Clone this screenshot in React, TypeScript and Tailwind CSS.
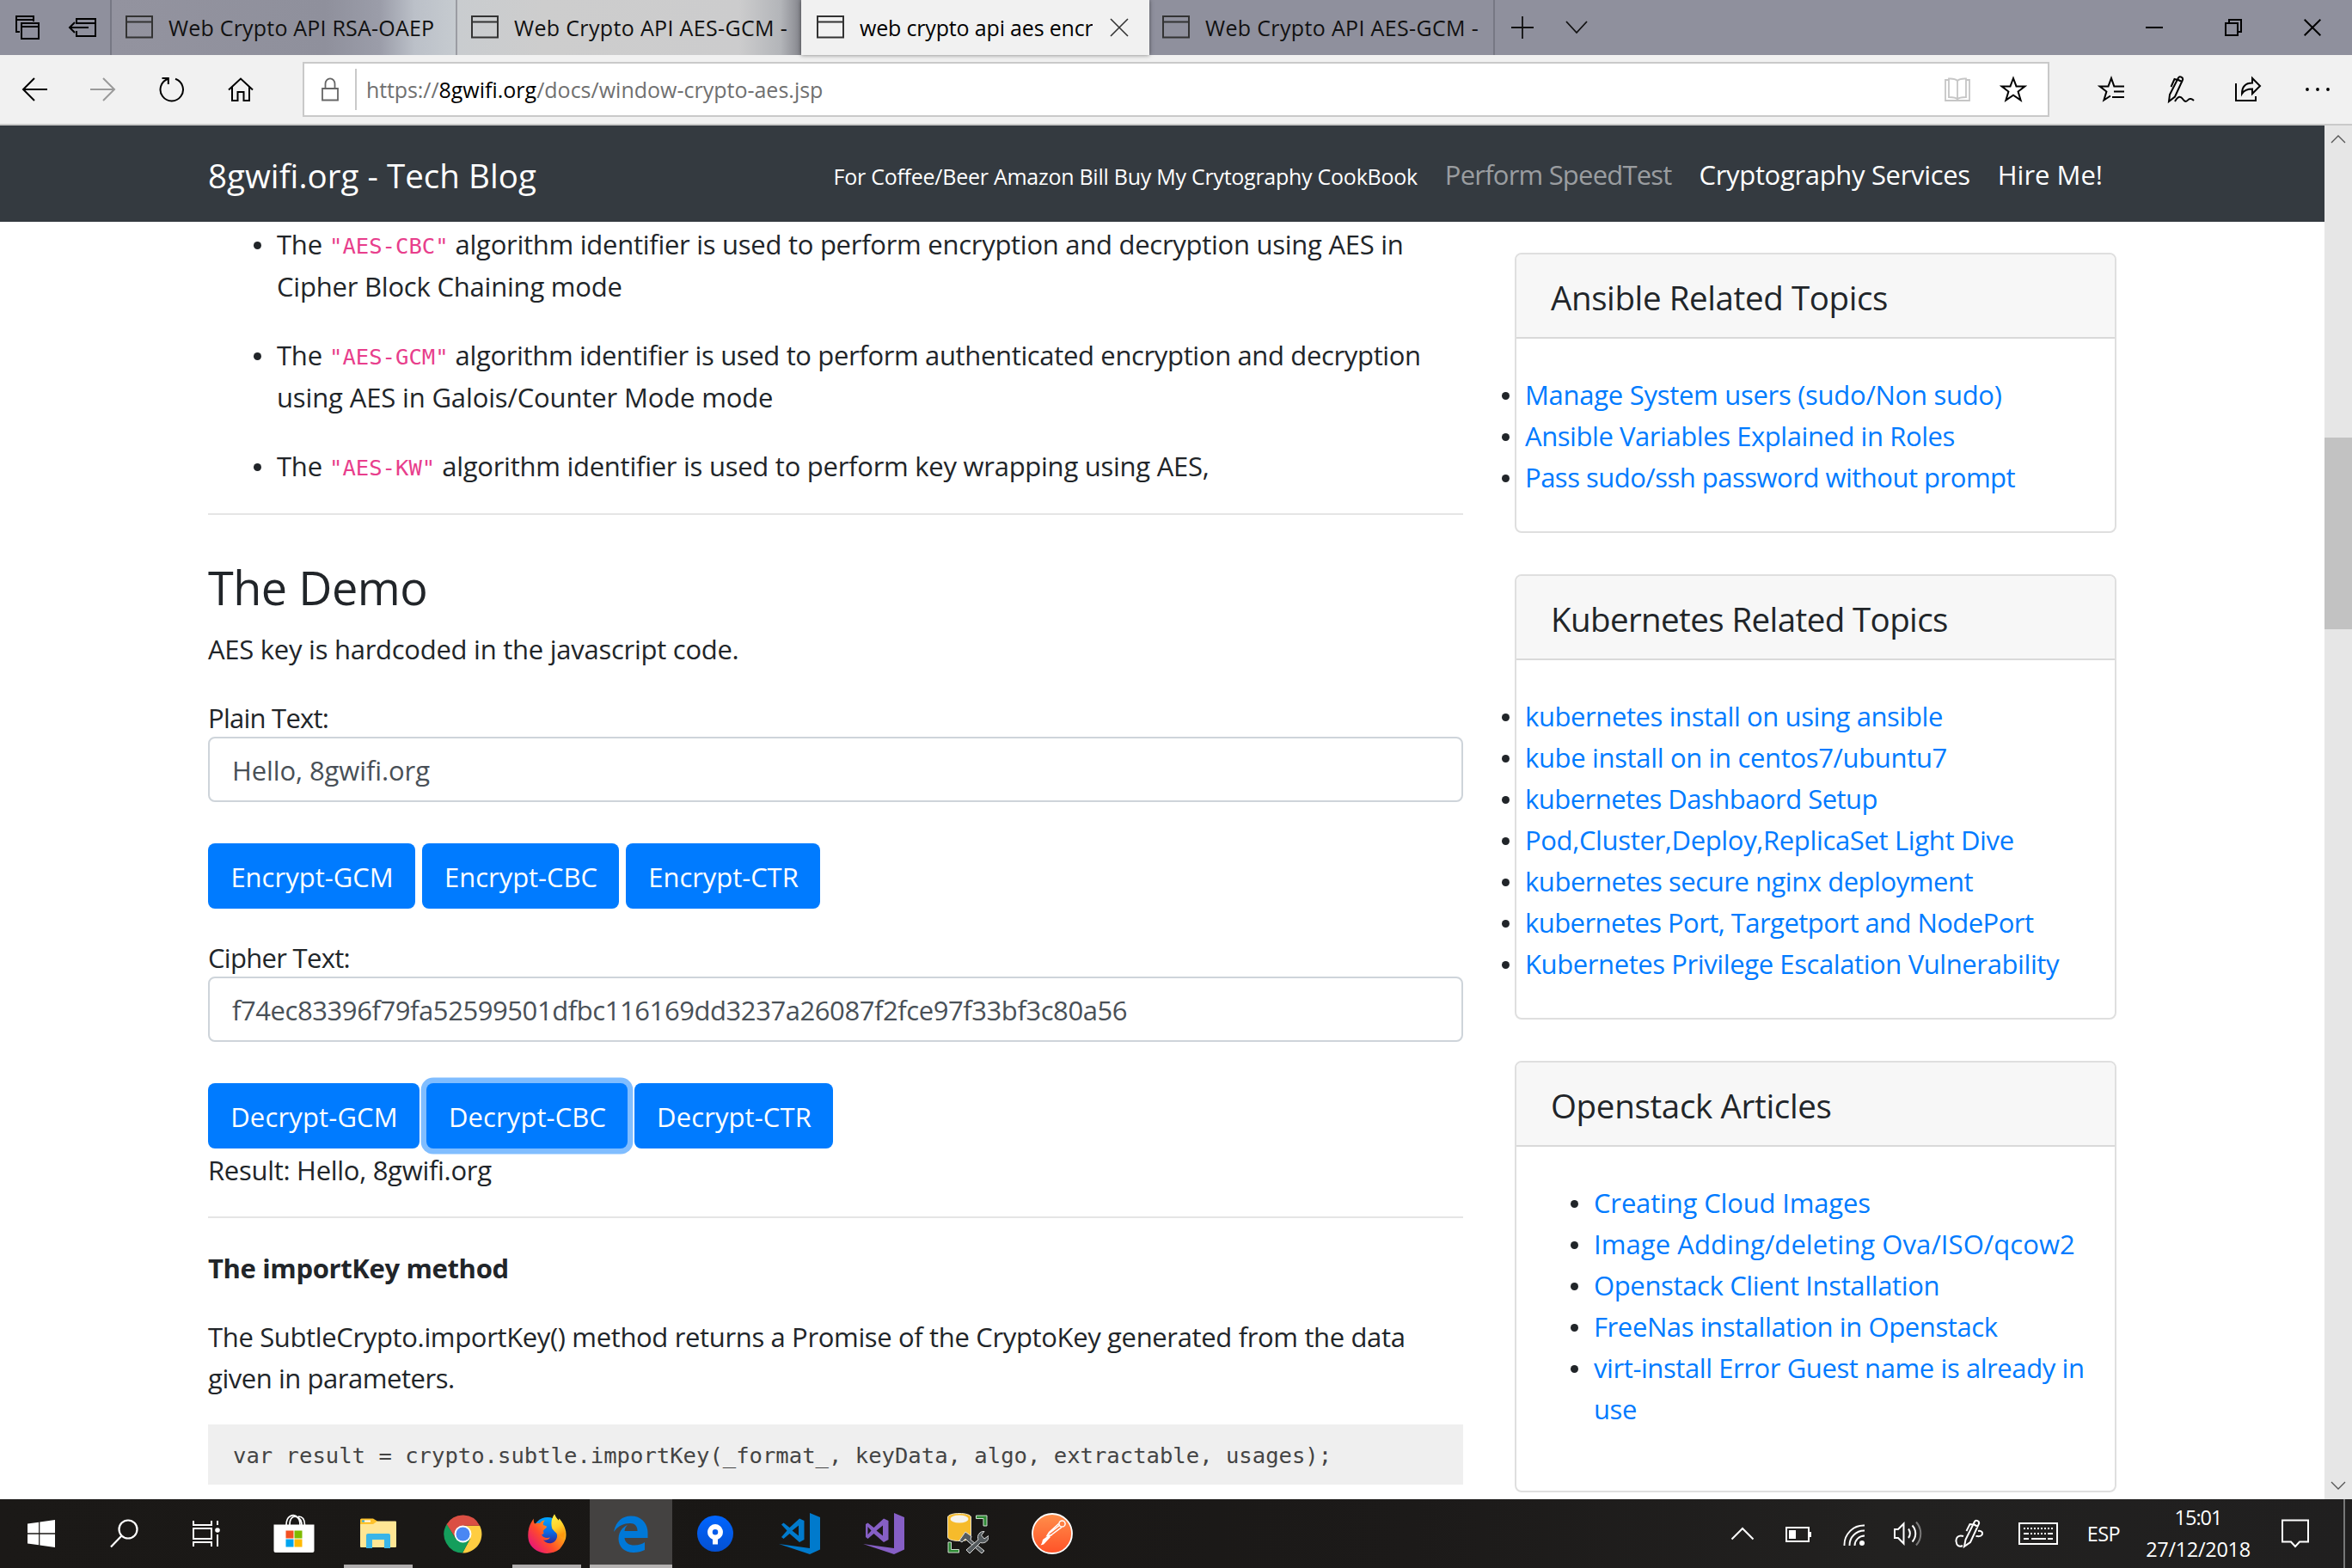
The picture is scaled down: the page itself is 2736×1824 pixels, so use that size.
import type { ReactNode } from "react";

const stroke = { fill: "none", stroke: "currentColor" } as const;

/* ---------- Browser tabs ---------- */

function PageIcon() {
  return (
    <svg width="32" height="28" viewBox="0 0 32 28" className="shrink-0 text-[#333]" {...stroke} strokeWidth="2">
      <path d="M1 1H31V25.500H1ZM1 7.500H31" />
    </svg>
  );
}

function TabTitle({ children, className }: { children: ReactNode; className: string }) {
  return <span className={`-mt-px ml-[18px] overflow-hidden text-[25px] leading-[34px] whitespace-nowrap ${className}`}>{children}</span>;
}

function TabBar() {
  return (
    <div className="flex h-16 bg-[#8f909d] text-[#111]">
      <div className="flex w-[130px] shrink-0 items-center border-r-2 border-[#777884] pl-[18px] text-black">
        <svg width="28" height="30" viewBox="0 0 28 30" {...stroke} strokeWidth="2">
          <path d="M5 20H1V2H21V8M1 6H21M7 10H27V28H7ZM7 14H27" />
        </svg>
        <svg width="33" height="24" viewBox="0 0 33 24" className="ml-[33px]" {...stroke} strokeWidth="2">
          <path d="M10 8V2H32V22H10V16M10 7H32M24 12H2M8 6L2 12L8 18" />
        </svg>
      </div>
      <div className="flex w-[402px] shrink-0 items-center border-r-2 border-[#9b9ca3] bg-[linear-gradient(90deg,#93939f_0%,#8f909c_62%,#9b9da9_78%,#bbc0c8_88%,#c6cbd0_100%)] pl-4">
        <PageIcon />
        <TabTitle className="tracking-[0.2px]">Web Crypto API RSA-OAEP</TabTitle>
      </div>
      <div className="flex w-[400px] shrink-0 items-center bg-[linear-gradient(90deg,#c9cccf_0%,#cdcdcd_25%,#cccccd_82%,#b3b5b9_94%,#85868d_100%)] pl-4">
        <PageIcon />
        <TabTitle className="tracking-[0.34px]">Web Crypto API AES-GCM -</TabTitle>
      </div>
      <div className="z-10 flex w-[405px] shrink-0 items-center bg-[#f1f1f1] pl-[18px] text-black shadow-[0_0_5px_rgba(0,0,0,0.5)]">
        <PageIcon />
        <TabTitle className="w-[271px] tracking-[-0.17px]">web crypto api aes encr</TabTitle>
        <svg width="22" height="22" viewBox="0 0 22 22" className="ml-[20px] text-[#333]" {...stroke} strokeWidth="1.600">
          <path d="M1 1L21 21M21 1L1 21" />
        </svg>
      </div>
      <div className="flex w-[402px] shrink-0 items-center border-r-2 border-[#777884] pl-[15px]">
        <PageIcon />
        <TabTitle className="tracking-[0.34px]">Web Crypto API AES-GCM -</TabTitle>
      </div>
      <div className="flex grow items-center pl-[18px]">
        <svg width="28" height="28" viewBox="0 0 28 28" {...stroke} strokeWidth="1.800">
          <path d="M1 14H27M14 1V27" />
        </svg>
        <svg width="26" height="16" viewBox="0 0 26 16" className="ml-9" {...stroke} strokeWidth="1.800">
          <path d="M1 1L13 14L25 1" />
        </svg>
        <div className="mr-9 ml-auto flex items-center text-black">
          <svg width="20" height="2" viewBox="0 0 20 2"><path d="M0 0H20V2H0Z" fill="currentColor" /></svg>
          <svg width="20" height="20" viewBox="0 0 20 20" className="ml-[72px]" {...stroke} strokeWidth="2">
            <path d="M1 5H15V19H1ZM5 5V1H19V15H15" />
          </svg>
          <svg width="20" height="20" viewBox="0 0 20 20" className="ml-[72px]" {...stroke} strokeWidth="2">
            <path d="M0.700 0.700L19.300 19.300M19.300 0.700L0.700 19.300" />
          </svg>
        </div>
      </div>
    </div>
  );
}

/* ---------- Address bar ---------- */

function AddressBar() {
  return (
    <div className="flex h-[82px] items-center border-b-2 border-[#c9c9c9] bg-[#f1f1f1] pl-[25px] text-black">
      <svg width="30" height="28" viewBox="0 0 30 28" {...stroke} strokeWidth="2"><path d="M30 14H2M15 1L2 14L15 27" /></svg>
      <svg width="30" height="28" viewBox="0 0 30 28" className="ml-[50px] text-[#9a9a9a]" {...stroke} strokeWidth="2"><path d="M0 14H28M15 1L28 14L15 27" /></svg>
      <svg width="30" height="30" viewBox="0 0 30 30" className="ml-[50px]" {...stroke} strokeWidth="2">
        <path d="M19 2.700A13.200 13.200 0 1 1 10.500 2.700M3.500 2H10.800V9" />
      </svg>
      <svg width="30" height="30" viewBox="0 0 30 30" className="ml-[50px]" {...stroke} strokeWidth="2">
        <path d="M1 15.500L15 2.500L29 15.500M5 12V28H11.500V18H18.500V28H25V12" />
      </svg>
      <div className="ml-[57px] flex h-16 w-[2032px] items-center border-2 border-[#c9c9c9] bg-white">
        <svg width="20" height="28" viewBox="0 0 20 28" className="ml-5 text-[#666]" {...stroke} strokeWidth="1.800">
          <path d="M1 13H19V26.500H1ZM4.500 13V7.500A5.500 6.200 0 0 1 15.500 7.500V13" />
        </svg>
        <div className="ml-[19px] h-12 w-[2px] bg-[#c9c9c9]" />
        <div className="ml-[11px] flex text-[25px] leading-[34px] whitespace-nowrap text-[#707070]">
          <span className="tracking-[-0.1px]">https://</span>
          <span className="text-black">8gwifi.org</span>
          <span>/docs/window-crypto-aes.jsp</span>
        </div>
        <svg width="30" height="28" viewBox="0 0 30 28" className="mr-[34px] ml-auto text-[#c6c6c6]" {...stroke} strokeWidth="1.800">
          <path d="M5 3H1V27H29V3H25M15 4C12 1 8 1.500 5 1.500V23C9 23 13 23 15 25.500C17 23 21 23 25 23V1.500C22 1.500 18 1 15 4ZM15 4V25" />
        </svg>
        <svg width="32" height="32" viewBox="0 0 32 32" className="mr-6" {...stroke} strokeWidth="2">
          <path d="M16 3L19.500 12.400H29.500L21.600 18.500L24.600 28.500L16 22.600L7.400 28.500L10.400 18.500L2.500 12.400H12.500Z" />
        </svg>
      </div>
      <svg width="32" height="32" viewBox="0 0 32 32" className="ml-[56px]" {...stroke} strokeWidth="2">
        <path d="M31 12.400H19.300L16 3L12.500 12.400H2.500L10.400 18.500L7.400 28.500L15 23.500M19 18.500H31M17 25H31" />
      </svg>
      <svg width="32" height="34" viewBox="0 0 32 34" className="ml-[49px]" {...stroke} strokeWidth="2">
        <path d="M2 31L3 23L13 3.500C14.500 1 19 3 18 6L9 25.500L2 31ZM12 5.500L18 8.500M12 6L8.500 5L4.500 14M9 31C13 24 16 25 18 28C20 31 22 32 24 29.500C26 27 29 28 31 30" />
      </svg>
      <svg width="32" height="32" viewBox="0 0 32 32" className="ml-[46px]" {...stroke} strokeWidth="2">
        <path d="M2 9V29H25V24M9 21C9 12 14 8.500 21 8.500V3L30 12L21 21V15.500C15 15.500 11.500 17 9 21Z" />
      </svg>
      <svg width="28" height="6" viewBox="0 0 28 6" className="ml-[51px]" fill="currentColor">
        <circle cx="2" cy="3" r="1.900" /><circle cx="14" cy="3" r="1.900" /><circle cx="26" cy="3" r="1.900" />
      </svg>
    </div>
  );
}

/* ---------- Blog page ---------- */

function Navbar() {
  return (
    <div className="flex h-28 items-center bg-[#343a40] pr-[258px] pl-[242px] text-[31px] leading-[48px] whitespace-nowrap text-white">
      <span className="mt-[4px] text-[38.5px] tracking-[0.04px]">8gwifi.org - Tech Blog</span>
      <div className="mt-[4px] ml-auto flex items-baseline gap-8">
        <span className="text-[25px] tracking-[-0.26px]">For Coffee/Beer Amazon Bill Buy My Crytography CookBook</span>
        <span className="tracking-[-0.8px] text-[#9a9da0]">Perform SpeedTest</span>
        <span className="tracking-[-0.33px]">Cryptography Services</span>
        <span>Hire Me!</span>
      </div>
    </div>
  );
}

function Bullet() {
  return <span className="mt-[21px] size-[9px] shrink-0 rounded-full bg-[#212529]" />;
}

function Algorithm({ name, children, rest }: { name: string; children: ReactNode; rest?: ReactNode }) {
  return (
    <li className="mb-8 flex pl-[53px]">
      <Bullet />
      <div className="ml-[18px]">
        <div className="flex h-[49px]">
          <span className="w-[61px] tracking-[-0.2px]">The</span>
          <code className="mr-[8px] pt-[2px] font-['DejaVu_Sans_Mono',monospace] text-[25.58px] text-[#e83e8c]">{name}</code>
          {children}
        </div>
        {rest}
      </div>
    </li>
  );
}

function Button({ children, className }: { children: ReactNode; className: string }) {
  return (
    <button className={`flex h-[76px] shrink-0 items-center justify-center rounded-lg bg-[#007bff] pt-px pl-px text-white ${className}`}>{children}</button>
  );
}

function Field({ children }: { children: ReactNode }) {
  return <div className="flex h-[76px] items-center rounded-lg border-2 border-[#ced4da] bg-white pt-[2px] pl-[26px] text-[#495057]">{children}</div>;
}

function Article() {
  return (
    <div className="w-[1460px] shrink-0 pt-[2px]">
      <ul>
        <Algorithm name={'"AES-CBC"'} rest={<div className="tracking-[-0.21px]">Cipher Block Chaining mode</div>}>
          <span className="tracking-[-0.27px]">algorithm identifier is used to perform encryption and decryption using AES in</span>
        </Algorithm>
        <Algorithm name={'"AES-GCM"'} rest={<div className="tracking-[-0.14px]">using AES in Galois/Counter Mode mode</div>}>
          <span className="tracking-[-0.35px]">algorithm identifier is used to perform authenticated encryption and decryption</span>
        </Algorithm>
        <Algorithm name={'"AES-KW"'}>
          <span className="tracking-[-0.26px]">algorithm identifier is used to perform key wrapping using AES,</span>
        </Algorithm>
      </ul>
      <div className="-mt-[2px] h-[2px] bg-[#e5e5e5]" />
      <h2 className="mt-[50px] text-[54px] leading-[68px] tracking-[-0.5px]">The Demo</h2>
      <p className="mt-[14px] tracking-[-0.26px]">AES key is hardcoded in the javascript code.</p>
      <p className="mt-[32px] mb-[-2px] tracking-[-0.75px]">Plain Text:</p>
      <Field><span className="tracking-[-0.1px]">Hello, 8gwifi.org</span></Field>
      <div className="mt-[48px] flex gap-2">
        <Button className="w-[241px]">Encrypt-GCM</Button>
        <Button className="w-[229px] tracking-[-0.05px]">Encrypt-CBC</Button>
        <Button className="w-[226px] tracking-[-0.05px]">Encrypt-CTR</Button>
      </div>
      <p className="mt-[33px] mb-[-2px] tracking-[-0.7px]">Cipher Text:</p>
      <Field><span className="tracking-[-0.43px]">f74ec83396f79fa52599501dfbc116169dd3237a26087f2fce97f33bf3c80a56</span></Field>
      <div className="mt-[48px] flex gap-2">
        <Button className="w-[246px] tracking-[0.16px]">Decrypt-GCM</Button>
        <Button className="w-[234px] tracking-[0.1px] shadow-[0_0_0_6.4px_#80bdff]">Decrypt-CBC</Button>
        <Button className="w-[231px] tracking-[0.1px]">Decrypt-CTR</Button>
      </div>
      <p className="mt-[1px] tracking-[-0.29px]">Result: Hello, 8gwifi.org</p>
      <div className="mt-[30px] h-[2px] bg-[#e5e5e5]" />
      <p className="mt-[34px] font-bold tracking-[-0.36px]">The importKey method</p>
      <p className="mt-8 tracking-[-0.35px]">The SubtleCrypto.importKey() method returns a Promise of the CryptoKey generated from the data</p>
      <p className="tracking-[-0.45px]">given in parameters.</p>
      <pre className="mt-[30px] h-[70px] bg-[#efefef] pl-[29px] font-['DejaVu_Sans_Mono',monospace] text-[25.58px] leading-[72px] text-[#444]">
        var result = crypto.subtle.importKey(_format_, keyData, algo, extractable, usages);
      </pre>
    </div>
  );
}

function Card({ title, titleClass, listClass, links }: { title: string; titleClass: string; listClass: string; links: [string, string][] }) {
  return (
    <div className="mb-12 rounded-lg border-2 border-[#dfdfdf] bg-white">
      <h5 className={`h-[98px] rounded-t-md border-b-2 border-[#d9d9d9] bg-[#f7f7f7] pt-6 pl-10 text-[38.5px] leading-[52px] ${titleClass}`}>{title}</h5>
      <ul className={`mt-[41px] ${listClass}`}>
        {links.map(([text, cls]) => (
          <li key={text} className="flex">
            <Bullet />
            <a className={`ml-[18px] whitespace-pre text-[#007bff] ${cls}`}>{text}</a>
          </li>
        ))}
      </ul>
    </div>
  );
}

function Sidebar() {
  return (
    <div className="ml-[60px] w-[700px] shrink-0 pt-9">
      <Card
        title="Ansible Related Topics"
        titleClass="tracking-[-0.4px]"
        listClass="-ml-[17px] mb-[39px]"
        links={[
          ["Manage System users (sudo/Non sudo)", "tracking-[-0.28px]"],
          ["Ansible Variables Explained in Roles", "tracking-[-0.43px]"],
          ["Pass sudo/ssh password without prompt", "tracking-[-0.5px]"],
        ]}
      />
      <Card
        title="Kubernetes Related Topics"
        titleClass="tracking-[-0.6px]"
        listClass="-ml-[17px] mb-[39px]"
        links={[
          ["kubernetes install on using ansible", "tracking-[-0.4px]"],
          ["kube install on in centos7/ubuntu7", "tracking-[-0.34px]"],
          ["kubernetes Dashbaord Setup", "tracking-[-0.52px]"],
          ["Pod,Cluster,Deploy,ReplicaSet Light Dive", "tracking-[-0.34px]"],
          ["kubernetes secure nginx deployment", "tracking-[-0.46px]"],
          ["kubernetes Port, Targetport and NodePort", "tracking-[-0.55px]"],
          ["Kubernetes Privilege Escalation Vulnerability", "tracking-[-0.4px]"],
        ]}
      />
      <Card
        title="Openstack Articles"
        titleClass="tracking-[-0.33px]"
        listClass="ml-[63px] mb-[71px]"
        links={[
          ["Creating Cloud Images", "tracking-[-0.16px]"],
          ["Image Adding/deleting Ova/ISO/qcow2", "tracking-[0.07px]"],
          ["Openstack Client Installation", "tracking-[-0.36px]"],
          ["FreeNas installation in Openstack", "tracking-[-0.4px]"],
          ["virt-install Error Guest name is already in\nuse", "tracking-[-0.41px]"],
        ]}
      />
    </div>
  );
}

function Scrollbar() {
  return (
    <div className="flex w-8 shrink-0 flex-col items-center bg-[#e6e6e6] text-[#555]">
      <svg width="18" height="10" viewBox="0 0 18 10" className="mt-[11px]" {...stroke} strokeWidth="1.300"><path d="M1 9L9 1L17 9" /></svg>
      <div className="mt-[342px] h-[223px] w-8 bg-[#c2c2c2]" />
      <svg width="18" height="10" viewBox="0 0 18 10" className="mt-auto mb-[11px]" {...stroke} strokeWidth="1.300"><path d="M1 1L9 9L17 1" /></svg>
    </div>
  );
}

/* ---------- Taskbar ---------- */

function Task({ children, running, active }: { children: ReactNode; running?: boolean; active?: boolean }) {
  return (
    <div className={`flex h-20 w-[98px] flex-col items-center ${active ? "px-px" : ""}`}>
      <div className={`flex h-[76px] items-center justify-center pt-1 ${active ? "w-24 bg-[#444241]" : "w-20"}`}>{children}</div>
      {active && <div className="h-1 w-24 bg-[#b5b2b1]" />}
      {running && <div className="h-1 w-20 bg-[#b0adad]" />}
    </div>
  );
}

function Taskbar() {
  return (
    <div className="flex h-20 items-stretch bg-[linear-gradient(90deg,#1b1917_0%,#191715_35%,#1c1a19_60%,#222120_80%,#201f1f_100%)] text-white">
      <div className="flex w-[293px] items-center pl-8">
        <svg width="32" height="32" viewBox="0 0 32 32" fill="currentColor">
          <path d="M0 4.600L13.100 2.800V15.300H0ZM14.300 2.600L32 0V15.300H14.300ZM0 16.700H13.100V29.200L0 27.400ZM14.300 16.700H32V32L14.300 29.400Z" />
        </svg>
        <svg width="34" height="34" viewBox="0 0 34 34" className="ml-16" {...stroke} strokeWidth="2.200">
          <circle cx="21" cy="12" r="10.500" /><path d="M13.500 19.500L1 32.500" />
        </svg>
        <svg width="34" height="32" viewBox="0 0 34 32" className="ml-[62px]" {...stroke} strokeWidth="2">
          <path d="M1 1V6H22V1M1 31V26H22V31M1 10H22V22H1ZM29 1V6M29 17V31" /><circle cx="29" cy="12" r="2.800" fill="white" stroke="none" />
        </svg>
      </div>

      <Task>
        <svg width="48" height="48" viewBox="0 0 48 48">
          <path d="M15 14C15 3 23 1 27 4C31 6 33 9 33 14M19 14C19 6 23 3 27 4.500C30 6 31 10 31 14M29 4C34 4 36.500 8 36.500 14" fill="none" stroke="white" strokeWidth="1.700" />
          <path d="M0.500 13.500H47.500V44a2 2 0 0 1-2 2H2.500a2 2 0 0 1-2-2Z" fill="white" />
          <path d="M14.500 20.500H23.500V29.500H14.500Z" fill="#f25022" /><path d="M24.500 20.500H33.500V29.500H24.500Z" fill="#7fba00" />
          <path d="M14.500 30.500H23.500V39.500H14.500Z" fill="#00a4ef" /><path d="M24.500 30.500H33.500V39.500H24.500Z" fill="#ffb900" />
        </svg>
      </Task>
      <Task running>
        <svg width="42" height="36" viewBox="0 0 42 36">
          <path d="M0 2a1.500 1.500 0 0 1 1.500-1.500H15L20 3.500V9H0Z" fill="#fdc22c" />
          <path d="M0 7H15L20 3.500H41a1 1 0 0 1 1 1V33a1 1 0 0 1-1 1H1a1 1 0 0 1-1-1Z" fill="#ffe694" />
          <path d="M2 2.500H5V4.500H2Z" fill="#3ab5e8" /><path d="M5 2.500H12V4.500H5Z" fill="white" />
          <path d="M7 35V20a2 2 0 0 1 2-2H33a2 2 0 0 1 2 2V35H28V25H14V35Z" fill="#3ab5e8" />
        </svg>
      </Task>
      <Task>
        <svg width="45" height="45" viewBox="0 0 48 48">
          <path d="M24 24L33.200 29.300L23.500 47.500A23.500 23.500 0 0 0 44.900 13.500H24Z" fill="#ffcd41" />
          <path d="M24 24L14.800 29.300L4.080 11.500A23.500 23.500 0 0 0 23.500 47.500L33.200 29.300Z" fill="#149e5c" />
          <path d="M3.900 11.800A23.500 23.500 0 0 1 44.900 13.500H24L14.500 28.500Z" fill="#db4f43" />
          <circle cx="24" cy="24" r="10.600" fill="white" /><circle cx="24" cy="24" r="8.600" fill="#4a87f3" />
        </svg>
      </Task>
      <Task running>
        <svg width="45" height="47" viewBox="0 0 45 47">
          <defs>
            <linearGradient id="ffBody" x1="1" y1="0.100" x2="0.100" y2="0.900">
              <stop offset="0" stopColor="#ffe226" /><stop offset="0.350" stopColor="#ff9a16" /><stop offset="0.650" stopColor="#ff4b2b" /><stop offset="1" stopColor="#e5127d" />
            </linearGradient>
            <linearGradient id="ffGlobe" x1="0" y1="0" x2="0" y2="1">
              <stop offset="0" stopColor="#00a7ff" /><stop offset="0.500" stopColor="#0a6be6" /><stop offset="1" stopColor="#3b1480" />
            </linearGradient>
            <linearGradient id="ffTail" x1="0" y1="0" x2="0.300" y2="1">
              <stop offset="0" stopColor="#fff14a" /><stop offset="0.600" stopColor="#ffd22b" /><stop offset="1" stopColor="#ff980e" />
            </linearGradient>
          </defs>
          <circle cx="23" cy="21" r="17" fill="url(#ffGlobe)" />
          <path d="M7 5.500C6.500 8 7 10 8 11.500C10 10.500 12 10.500 14 11C15.500 8.500 18 7.500 20 7.500C18 9.500 17.500 11 18 13C20 14 22 14 22 15C22 17 18 18 18 20C18 22 20 23 16 24C17 28 22 28.500 26 27.500C24 30.500 20 31 18 30.500C22 36 32 36 34 27C34.500 22 32 20 28 17C28 9 28 5 31 0.500C32 3.500 34 5.500 36 8L36.500 5.500C42 12 46 20 44 29C42 34 41 36 37 41C25 50 8 46 2 34C-1 27 0 17 4 10C5 8 6 6.500 7 5.500Z" fill="url(#ffBody)" />
          <path d="M31 0.500C32 3.500 34 5.500 36 8L36.500 5.500C41 11 45 20 42 28C38 26 30 21 28 16C26.500 9 28 5 31 0.500Z" fill="url(#ffTail)" />
        </svg>
      </Task>
      <Task active>
        <svg width="40" height="43" viewBox="0 0 40 43">
          <path d="M0 19C2 8 9 0.500 20 0.500C33 0.500 39.500 10 39.500 20V26H12.500C13 32 18 34.500 24 34.500C29 34.500 33 33 36 31V40C32 42 28 43 23 43C12 43 5.500 36 5.500 27C5.500 19 10 13.500 16 11C13.500 13.500 12.800 15.500 12.500 18H27.500C27.500 13 25 9 19 9C10.500 9 4 13 0 19Z" fill="#0078d7" />
        </svg>
      </Task>
      <Task>
        <svg width="42" height="42" viewBox="0 0 42 42">
          <defs><linearGradient id="stree" x1="0" y1="0" x2="0" y2="1"><stop offset="0" stopColor="#0065ff" /><stop offset="1" stopColor="#0450d2" /></linearGradient></defs>
          <circle cx="21" cy="21" r="21" fill="url(#stree)" />
          <path d="M21 10a9.200 9.200 0 0 0-3 17.800V33.500H24V27.800A9.200 9.200 0 0 0 21 10ZM21 16a3.200 3.200 0 1 1 0 6.500a3.200 3.200 0 1 1 0-6.500Z" fill="white" fillRule="evenodd" />
        </svg>
      </Task>
      <Task>
        <svg width="48" height="48" viewBox="0 0 48 48" fill="#007acc">
          <path d="M36 0L48 5V42.500L36 48L0 36L36 41Z" />
          <path fillRule="evenodd" d="M24 6.500L29.500 9V31L24 34L12.500 24L5.500 30L3 28L9.500 20.500L3 13.500L5.500 11.500L12.500 17ZM23 14.500L15.500 20.500L23 26.500Z" />
        </svg>
      </Task>
      <Task>
        <svg width="48" height="48" viewBox="0 0 48 48" fill="#865fc5">
          <path d="M36 0L48 5V42.500L36 48L0 36L36 41Z" />
          <path fillRule="evenodd" d="M24 6.500L29.500 9V31L24 34L12.500 24L5.500 30L3 28V13L5.500 11.500L12.500 17ZM23 14.500L15.500 20.500L23 26.500ZM5.500 16V25L9.500 20.500Z" />
        </svg>
      </Task>
      <Task>
        <svg width="48" height="48" viewBox="0 0 48 48">
          <path d="M0.500 5C0.500 -1 27.500 -1 27.500 5V28C27.500 34 0.500 34 0.500 28Z" fill="#f6bb2b" stroke="#e9e2c8" />
          <ellipse cx="14" cy="7" rx="10.500" ry="4.500" fill="#f4f2ec" />
          <path d="M33.500 3H46V15H42V6.500H33.500ZM1 34H4.500V42.500H13.500V46H1Z" fill="#2f8a35" stroke="#cfe0cf" />
          <path d="M14 32L21 22L28 27L27 31L43 44L40 47L24 33L21 30L17 34Z" fill="#555b5e" stroke="#dcdcdc" />
          <path d="M22 43L36 31C34 26 38 21 43 21.500L39.500 26L43 30L48 26.500C48.500 32 44 36 38.500 34.500L26 47Z" fill="#555b5e" stroke="#dcdcdc" />
        </svg>
      </Task>
      <Task>
        <svg width="48" height="48" viewBox="0 0 48 48">
          <defs><linearGradient id="postman" x1="0" y1="0" x2="0" y2="1"><stop offset="0" stopColor="#ff8f4b" /><stop offset="1" stopColor="#ff5228" /></linearGradient></defs>
          <circle cx="24" cy="24" r="23" fill="url(#postman)" stroke="white" strokeWidth="1.800" />
          <circle cx="35.500" cy="12.500" r="3.600" fill="none" stroke="white" strokeWidth="1.500" />
          <path d="M33 14L19 25M35 16.500L21 27M31.500 12.500L20.500 22.500L18 26.500L24 25.500" stroke="white" strokeWidth="1.500" fill="none" />
          <path d="M20 26L13 31L12 35L10.500 37.500L14 36.500L22 28Z" fill="white" />
        </svg>
      </Task>

      <div className="mr-2 ml-auto flex items-center border-r-2 border-[#777]">
        <svg width="28" height="16" viewBox="0 0 28 16" {...stroke} strokeWidth="2"><path d="M1.500 14.500L14 2L26.500 14.500" /></svg>
        <svg width="30" height="18" viewBox="0 0 30 18" className="mt-[2px] ml-9"><path d="M1 1H27V17H1Z" fill="none" stroke="white" strokeWidth="2" /><path d="M4 4H12V14H4ZM28 6H30V12H28Z" fill="white" /></svg>
        <svg width="26" height="26" viewBox="0 0 26 26" className="mt-[4px] ml-[37px]" {...stroke} strokeWidth="1.900">
          <path d="M1.500 25A22.500 22.500 0 0 1 25 1.500M7.500 25A17 17 0 0 1 25 7.500M13.500 25A11.500 11.500 0 0 1 25 13.500" /><circle cx="22" cy="22" r="3" fill="white" stroke="none" />
        </svg>
        <svg width="34" height="30" viewBox="0 0 34 30" className="ml-[33px]" {...stroke} strokeWidth="2">
          <path d="M1 10H5L11.500 3.500V26.500L5 20H1ZM17 9.500C19.500 12.500 19.500 17 17 20M21.500 5.500C26.500 11 26.500 19 21.500 24.500" /><path d="M26 1.500C33 9 33 21 26 28.500" opacity="0.400" />
        </svg>
        <svg width="34" height="34" viewBox="0 0 34 34" className="ml-[37px]" {...stroke} strokeWidth="2">
          <path d="M11 32L12.500 24L23 3C24.500 0.500 29 2.500 28 5.500L18 27L11 32ZM21.500 6L27 9M21 6.500L17.500 6L13.500 14M10 20C4 18 1 22 1.500 26C2 31 5 33 9 31M27 14C31 13 33 16 31.500 18.500C30 21 27 20 24.500 20" />
        </svg>
        <svg width="46" height="26" viewBox="0 0 46 26" className="ml-10" {...stroke} strokeWidth="2">
          <path d="M1 1H45V25H1Z" /><path d="M6 7H40" strokeDasharray="2 2" /><path d="M6 13H12M34 13H40" /><path d="M14 13H34" strokeDasharray="2 2" /><path d="M6 19H12M15 19H32M34 19H40" />
        </svg>
        <span className="ml-[34px] pt-[2px] text-[23.5px] tracking-[-0.6px]">ESP</span>
        <div className="ml-[30px] flex w-[122px] flex-col items-center text-[23.5px] leading-[37px] whitespace-nowrap">
          <span className="tracking-[-1px]">15:01</span>
          <span className="tracking-[-0.3px]">27/12/2018</span>
        </div>
        <svg width="32" height="34" viewBox="0 0 32 34" className="mr-[40px] ml-[36px]" {...stroke} strokeWidth="2">
          <path d="M1 1.500H31V26.500H21L16 32L11 26.500H1Z" />
        </svg>
      </div>
    </div>
  );
}

export default function App() {
  return (
    <div className="flex h-[1824px] w-[2736px] flex-col overflow-hidden bg-white font-['Open_Sans','Noto_Sans',sans-serif]">
      <TabBar />
      <AddressBar />
      <div className="flex h-[1598px] shrink-0">
        <div className="h-[1598px] w-[2704px] overflow-hidden">
          <Navbar />
          <div className="flex pl-[242px] text-[31px] leading-[48px] whitespace-nowrap text-[#212529]">
            <Article />
            <Sidebar />
          </div>
        </div>
        <Scrollbar />
      </div>
      <Taskbar />
    </div>
  );
}
